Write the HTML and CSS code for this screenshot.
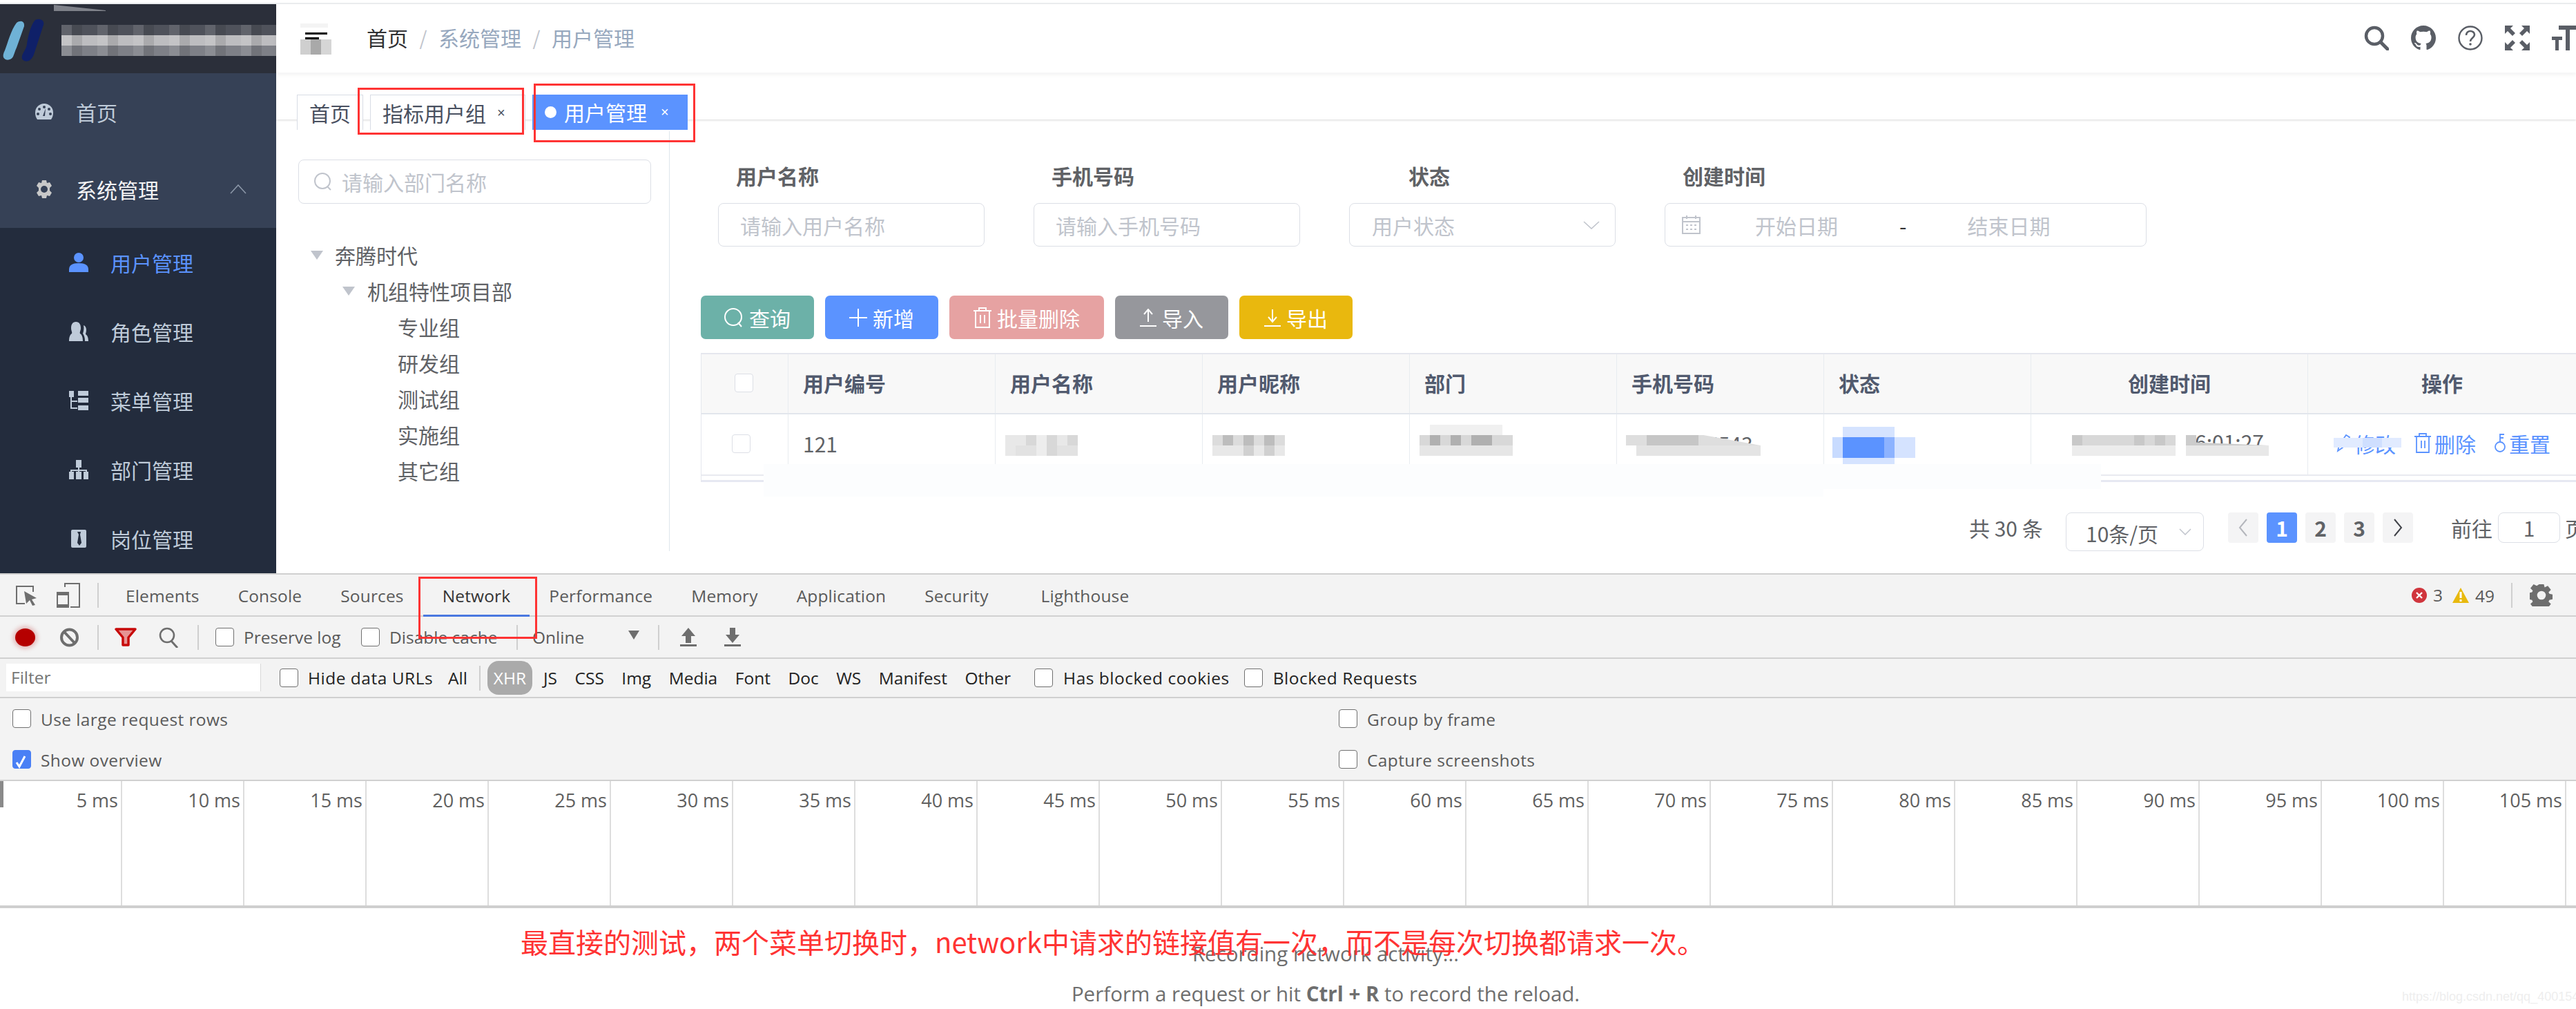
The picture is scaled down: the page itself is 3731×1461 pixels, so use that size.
FILE: index.html
```html
<!DOCTYPE html>
<html lang="zh-CN">
<head>
<meta charset="utf-8">
<title>用户管理</title>
<link rel="stylesheet" href="styles.css">
</head>
<body>
<div class="topline"></div>
<div class="app">
  <aside class="sidebar">
    <div class="logo">
      <svg class="logo-mark" width="66" height="66" viewBox="0 0 66 66"><path d="M20 6c5-4 12-3 11 5L20 42c-2 4-3 8-5 13-3 6-12 6-14 1-1-3 0-6 2-10 4-10 9-30 17-40z" fill="#6fb2d6"/><path d="M47 2c6-3 14 0 12 7L45 52c-2 6-8 12-14 9-4-2-4-5-2-10 3-6 5-8 6-14 1-6 4-26 12-35z" fill="#0f2068"/></svg>
      <div class="logo-mosaic"></div>
    </div>
    <nav class="menu">
      <div class="menu-item">
        <svg class="mi" viewBox="0 0 28 28"><path d="M14 2a13 13 0 0 0-13 13c0 4 1 7 3 10h20c2-3 3-6 3-10A13 13 0 0 0 14 2z" fill="#bfcbd9"/><g fill="#364156"><circle cx="14" cy="7" r="2"/><circle cx="7" cy="10" r="2"/><circle cx="21" cy="10" r="2"/><circle cx="5" cy="17" r="2"/><circle cx="23" cy="17" r="2"/><path d="M16 9l-1 11h-3z"/></g></svg>
        <span>首页</span>
      </div>
      <div class="menu-item is-open">
        <svg class="mi" viewBox="0 0 28 28"><path d="M11 1h6l1 4 4-1 3 5-3 3v4l3 3-3 5-4-1-1 4h-6l-1-4-4 1-3-5 3-3v-4L3 9l3-5 4 1z" fill="#c8c8c8"/><circle cx="14" cy="14" r="5" fill="#364156"/></svg>
        <span>系统管理</span>
        <svg class="caret" width="24" height="14" viewBox="0 0 24 14"><path d="M1 13L12 1l11 12" fill="none" stroke="#8c97a8" stroke-width="1.6"/></svg>
      </div>
      <div class="submenu">
        <div class="sub-item active">
          <svg class="mi" viewBox="0 0 28 28"><circle cx="14" cy="7" r="7" fill="#5b93ff"/><path d="M0 28v-4c0-6 5-9 14-9s14 3 14 9v4z" fill="#5b93ff"/></svg>
          <span>用户管理</span>
        </div>
        <div class="sub-item">
          <svg class="mi" viewBox="0 0 28 28"><path d="M10 0c5 0 7 4 7 9 0 4-2 6-1 8 3 2 4 6 4 11H0c0-5 1-9 4-11 1-2-1-4-1-8 0-5 2-9 7-9z" fill="#bfcbd9"/><path d="M21 5c3 1 4 4 4 7s-1 4-1 6c2 1 4 4 4 10h-5c0-5-1-8-3-11 1-3 2-8 1-12z" fill="#bfcbd9"/></svg>
          <span>角色管理</span>
        </div>
        <div class="sub-item">
          <svg class="mi" viewBox="0 0 28 28"><g fill="#bfcbd9"><rect width="7" height="9"/><rect x="13" width="15" height="7"/><rect x="13" y="10" width="15" height="7"/><rect x="13" y="21" width="15" height="7"/><path d="M2 9h2v5h8v2H4v8h8v2H2z"/></g></svg>
          <span>菜单管理</span>
        </div>
        <div class="sub-item">
          <svg class="mi" viewBox="0 0 28 28"><g fill="#bfcbd9"><rect x="10" width="8" height="11"/><rect y="17" width="7" height="11"/><rect x="10" y="17" width="8" height="11"/><rect x="21" y="17" width="7" height="11"/><path d="M13 11h2v3h11v3h-2v-1H15v1h-2v-1H4v1H2v-3h11z"/></g></svg>
          <span>部门管理</span>
        </div>
        <div class="sub-item">
          <svg class="mi" viewBox="0 0 28 28"><rect x="3" y="1" width="22" height="26" rx="2" fill="#bfcbd9"/><path d="M12 4h5l-1 4 2 12-3 4-3-4 2-12z" fill="#232c3d"/></svg>
          <span>岗位管理</span>
        </div>
      </div>
    </nav>
  </aside>

  <main class="content">
    <header class="navbar">
      <div class="hamburger"><i class="hb-bar"></i><i class="hb-bar hb-short"></i></div>
      <div class="crumbs">
        <span class="crumb-home">首页</span><span class="sep">/</span><span>系统管理</span><span class="sep">/</span><span>用户管理</span>
      </div>
      <div class="nav-icons">
        <svg width="36" height="36" viewBox="0 0 36 36"><circle cx="15" cy="15" r="12" fill="none" stroke="#5a5e66" stroke-width="4.5"/><path d="M24 24l10 10" stroke="#5a5e66" stroke-width="5" stroke-linecap="round"/></svg>
        <svg width="36" height="36" viewBox="0 0 16 16"><path fill="#5a5e66" d="M8 0C3.58 0 0 3.58 0 8c0 3.54 2.29 6.53 5.47 7.59.4.07.55-.17.55-.38 0-.19-.01-.82-.01-1.49-2.01.37-2.53-.49-2.69-.94-.09-.23-.48-.94-.82-1.13-.28-.15-.68-.52-.01-.53.63-.01 1.08.58 1.23.82.72 1.21 1.87.87 2.33.66.07-.52.28-.87.51-1.07-1.78-.2-3.64-.89-3.64-3.95 0-.87.31-1.59.82-2.15-.08-.2-.36-1.02.08-2.12 0 0 .67-.21 2.2.82.64-.18 1.32-.27 2-.27s1.36.09 2 .27c1.53-1.04 2.2-.82 2.2-.82.44 1.1.16 1.92.08 2.12.51.56.82 1.27.82 2.15 0 3.07-1.87 3.75-3.65 3.95.29.25.54.73.54 1.48 0 1.07-.01 1.93-.01 2.2 0 .21.15.46.55.38A8.01 8.01 0 0 0 16 8c0-4.42-3.58-8-8-8z"/></svg>
        <svg width="36" height="36" viewBox="0 0 36 36"><circle cx="18" cy="18" r="16.5" fill="none" stroke="#5a5e66" stroke-width="2.4"/><path d="M12 14c0-4 3-6 6-6s6 2 6 5c0 5-6 5-6 10" fill="none" stroke="#5a5e66" stroke-width="2.6"/><circle cx="18" cy="27" r="1.8" fill="#5a5e66"/></svg>
        <svg width="36" height="36" viewBox="0 0 36 36"><g fill="#5a5e66"><path d="M0 0h12L8 4l7 7-4 4-7-7-4 4z"/><path d="M36 0H24l4 4-7 7 4 4 7-7 4 4z"/><path d="M0 36H12L8 32l7-7-4-4-7 7-4-4z"/><path d="M36 36H24l4-4-7-7 4-4 7 7 4-4z"/></g></svg>
        <svg class="icon-size" width="36" height="36" viewBox="0 0 36 36"><g fill="#5a5e66"><path d="M10 0h26v6H26v30h-6V6H10z"/><path d="M0 16h15v5h-5v15H5V21H0z"/></g></svg>
      </div>
    </header>

    <div class="tags">
      <span class="tag">首页</span>
      <span class="tag">指标用户组<i class="x">×</i></span>
      <span class="tag tag-active"><i class="dot"></i>用户管理<i class="x">×</i></span>
    </div>

    <div class="page">
      <section class="tree-panel">
        <div class="field tree-search">
          <svg width="28" height="26" viewBox="0 0 28 26"><circle cx="13" cy="12" r="11" fill="none" stroke="#c0c4cc" stroke-width="2"/><path d="M20 20l5 5" stroke="#c0c4cc" stroke-width="2"/></svg>
          <span class="ph">请输入部门名称</span>
        </div>
        <ul class="tree">
          <li class="t1"><i class="tri"></i>奔腾时代</li>
          <li class="t2"><i class="tri"></i>机组特性项目部</li>
          <li class="t3">专业组</li>
          <li class="t3">研发组</li>
          <li class="t3">测试组</li>
          <li class="t3">实施组</li>
          <li class="t3">其它组</li>
        </ul>
      </section>

      <section class="list-panel">
        <form class="filters">
          <div class="fi">
            <label>用户名称</label>
            <div class="field"><span class="ph">请输入用户名称</span></div>
          </div>
          <div class="fi">
            <label>手机号码</label>
            <div class="field"><span class="ph">请输入手机号码</span></div>
          </div>
          <div class="fi fi-status">
            <label>状态</label>
            <div class="field field-select"><span class="ph">用户状态</span>
              <svg width="24" height="12" viewBox="0 0 24 12"><path d="M1 1l11 10L23 1" fill="none" stroke="#c0c4cc" stroke-width="1.6"/></svg>
            </div>
          </div>
          <div class="fi fi-date">
            <label>创建时间</label>
            <div class="field field-date">
              <svg width="27" height="27" viewBox="0 0 27 27"><g fill="none" stroke="#c0c4cc" stroke-width="2"><rect x="1" y="3" width="25" height="23"/><path d="M1 9h25M7 0v5M20 0v5"/></g><g fill="#c0c4cc"><rect x="6" y="13" width="3" height="2"/><rect x="12" y="13" width="3" height="2"/><rect x="18" y="13" width="3" height="2"/><rect x="6" y="19" width="3" height="2"/><rect x="12" y="19" width="3" height="2"/><rect x="18" y="19" width="3" height="2"/></g></svg>
              <span class="ph date-start">开始日期</span>
              <span class="date-sep">-</span>
              <span class="ph date-end">结束日期</span>
            </div>
          </div>
        </form>

        <div class="actions">
          <button type="button" class="btn b-green"><svg width="28" height="28" viewBox="0 0 28 28"><circle cx="13" cy="13" r="12" fill="none" stroke="#fff" stroke-width="2"/><path d="M20 21l5 6" stroke="#fff" stroke-width="2"/></svg>查询</button>
          <button type="button" class="btn b-blue"><svg width="26" height="26" viewBox="0 0 26 26"><path d="M13 0v26M0 13h26" stroke="#fff" stroke-width="2"/></svg>新增</button>
          <button type="button" class="btn b-red"><svg width="26" height="30" viewBox="0 0 26 30"><g fill="none" stroke="#fff" stroke-width="2"><path d="M0 5h26M8 5V1h10v4M3 5v24h20V5M10 11v12M16 11v12"/></g></svg>批量删除</button>
          <button type="button" class="btn b-grey"><svg width="24" height="26" viewBox="0 0 24 26"><path d="M12 19V1M6 8l6-7 6 7M0 25h24" fill="none" stroke="#fff" stroke-width="2"/></svg>导入</button>
          <button type="button" class="btn b-yellow"><svg width="24" height="26" viewBox="0 0 24 26"><path d="M12 1v18M6 12l6 7 6-7M0 25h24" fill="none" stroke="#fff" stroke-width="2"/></svg>导出</button>
        </div>

        <div class="table">
          <div class="row head">
            <div class="c"><i class="cb"></i></div>
            <div class="c">用户编号</div>
            <div class="c">用户名称</div>
            <div class="c">用户昵称</div>
            <div class="c">部门</div>
            <div class="c">手机号码</div>
            <div class="c">状态</div>
            <div class="c center">创建时间</div>
            <div class="c center">操作</div>
          </div>
          <div class="row body">
            <div class="c"><i class="cb cb-body"></i></div>
            <div class="c">121</div>
            <div class="c">
              <svg class="mz mz-name" width="105" height="30" viewBox="0 0 7 2" shape-rendering="crispEdges"><path fill="#e8e8e8" d="M0 0h7v2H0z"/><path fill="#d8d8d8" d="M2 0h1v1H2zM4 0h1v2H4zM6 0h1v1H6z"/><path fill="#e2e2e2" d="M1 1h2v1H1zM5 1h2v1H5z"/><path fill="#ededed" d="M3 0h1v2H3z"/></svg>
            </div>
            <div class="c">
              <svg class="mz mz-name" width="105" height="30" viewBox="0 0 7 2" shape-rendering="crispEdges"><path fill="#dcdcdc" d="M0 0h7v1H0z"/><path fill="#bdbdbd" d="M1 0h1v1H1zM3 0h1v1H3zM5 0h1v1H5z"/><path fill="#e8e8e8" d="M0 1h7v1H0z"/><path fill="#d0d0d0" d="M3 1h1v1H3zM5 1h1v1H5z"/></svg>
            </div>
            <div class="c">
              <svg class="mz mz-dept" width="135" height="45" viewBox="0 0 9 3" shape-rendering="crispEdges"><path fill="#f0f0f0" d="M1 0h7v1H1z"/><path fill="#d8d8d8" d="M0 1h9v1H0z"/><path fill="#b0b0b0" d="M1 1h1v1H1zM3 1h1v1H3zM5 1h2v1H5z"/><path fill="#e6e6e6" d="M0 2h9v1H0z"/></svg>
            </div>
            <div class="c cell-clip">5543
              <svg class="mz mz-phone" width="195" height="30" viewBox="0 0 13 2"><path fill="#dedede" d="M0 0h7.5l5.5 1H0z"/><path fill="#c6c6c6" d="M2 0h5v1H2z"/><path fill="#e4e4e4" d="M1 1h12v1H1z"/></svg>
            </div>
            <div class="c">
              <svg class="mz mz-status" width="120" height="60" viewBox="0 0 8 4" shape-rendering="crispEdges"><path fill="#d5e3ff" d="M1 0h5v1H1zM1 3h5v1H1z"/><path fill="#c8dbff" d="M0 1h1v2H0z"/><path fill="#5b93ff" d="M1 1h4v2H1z"/><path fill="#8db3ff" d="M5 1h1v2H5z"/><path fill="#d5e3ff" d="M6 1h2v2H6z"/></svg>
            </div>
            <div class="c cell-time">
              <span class="time-text">6:01:27</span>
              <svg class="mz mz-time" width="285" height="30" viewBox="0 0 19 2"><path fill="#d8d8d8" d="M0 0h10v1H0z"/><path fill="#c8c8c8" d="M0 0h1v1H0zM6 0h1v1H6zM8 0h1v1H8z"/><path fill="#ececec" d="M0 1h10v1H0z"/><path fill="#cccccc" d="M11 0h1v.7l7 .3v1h-8z"/><path fill="#e8e8e8" d="M11 1h8v1h-8z"/></svg>
            </div>
            <div class="c ops">
              <span class="op">
                <svg width="22" height="30" viewBox="0 0 22 30"><path d="M3 26l2-9L15 3l5 3L10 21z" fill="none" stroke="#5b93ff" stroke-width="1.8"/></svg>修改
                <svg class="mz mz-op" width="105" height="14" viewBox="0 0 7 1" shape-rendering="crispEdges"><path fill="#e1ebff" d="M0 0h7v1H0z"/><path fill="#cfdfff" d="M3 0h2v1H3z"/></svg>
              </span>
              <span class="op"><svg width="24" height="30" viewBox="0 0 24 30"><path d="M0 5h24M7 5V1h10v4M3 5v23h18V5M10 11v11M15 11v11" fill="none" stroke="#5b93ff" stroke-width="1.8"/></svg>删除</span>
              <span class="op"><svg width="16" height="30" viewBox="0 0 16 30"><circle cx="8" cy="20" r="7" fill="none" stroke="#5b93ff" stroke-width="1.8"/><path d="M8 13V2h6M8 7h5" fill="none" stroke="#5b93ff" stroke-width="1.8"/></svg>重置</span>
            </div>
          </div>
          <div class="row tail"></div>
          <div class="smear smear-a"></div>
          <div class="smear smear-b"></div>
        </div>

        <div class="pager">
          <span class="total">共 30 条</span>
          <div class="field size"><span>10条/页</span><svg width="18" height="10" viewBox="0 0 18 10"><path d="M1 1l8 8 8-8" fill="none" stroke="#c0c4cc" stroke-width="1.5"/></svg></div>
          <span class="pg pg-nav"><svg width="14" height="26" viewBox="0 0 14 26"><path d="M12 1L2 13l10 12" fill="none" stroke="#b4b6bc" stroke-width="2"/></svg></span>
          <span class="pg pg-on">1</span>
          <span class="pg">2</span>
          <span class="pg">3</span>
          <span class="pg pg-nav"><svg width="14" height="26" viewBox="0 0 14 26"><path d="M2 1l10 12L2 25" fill="none" stroke="#404248" stroke-width="2"/></svg></span>
          <span class="goto">前往</span>
          <span class="field goto-in">1</span>
          <span class="goto-end">页</span>
        </div>
      </section>
    </div>
  </main>
</div>

<section class="devtools">
  <div class="dt-bar dt-tabs">
    <svg class="dt-i1" width="32" height="30" viewBox="0 0 32 30"><path d="M14 27H2V2h24v8" fill="none" stroke="#6e6e6e" stroke-width="2"/><path d="M13 9l18 10-7 2 5 8-4 1-4-8-5 5z" fill="#6e6e6e"/></svg>
    <svg class="dt-i2" width="34" height="36" viewBox="0 0 34 36"><path d="M12 6V1h21v34H20" fill="none" stroke="#6e6e6e" stroke-width="2"/><rect x="1" y="14" width="16" height="21" fill="none" stroke="#6e6e6e" stroke-width="2"/><rect x="1" y="14" width="16" height="4" fill="#6e6e6e"/><rect x="1" y="31" width="16" height="4" fill="#6e6e6e"/></svg>
    <i class="dt-sep dt-sep-a"></i>
    <nav class="dt-nav">
      <span>Elements</span><span>Console</span><span>Sources</span><span class="on">Network</span><span>Performance</span><span>Memory</span><span>Application</span><span>Security</span><span class="last">Lighthouse</span>
    </nav>
    <div class="dt-status">
      <svg width="22" height="22" viewBox="0 0 22 22"><circle cx="11" cy="11" r="11" fill="#d0353d"/><path d="M7 7l8 8M15 7l-8 8" stroke="#fff" stroke-width="2.4"/></svg>
      <span class="n1">3</span>
      <svg width="24" height="22" viewBox="0 0 24 22"><path d="M12 0l12 22H0z" fill="#e8b90e"/><rect x="10.5" y="6" width="3" height="9" fill="#fff"/><rect x="10.5" y="17" width="3" height="3" fill="#fff"/></svg>
      <span class="n2">49</span>
      <i class="dt-sep dt-sep-b"></i>
      <svg class="gear" width="34" height="32" viewBox="0 0 28 28"><path fill="#6e6e6e" d="M11 0h6l1 4 4-2 4 5-3 3 1 2 4 1v6l-4 1-1 2 3 3-4 5-4-2-1 0-1 4h-6l-1-4-1 0-4 2-4-5 3-3-1-2-4-1V11l4-1 1-2-3-3 4-5 4 2z"/><circle cx="14" cy="14" r="5.5" fill="#f3f3f3"/></svg>
    </div>
  </div>
  <div class="dt-bar dt-tools">
    <i class="rec"></i>
    <svg class="ti-block" width="29" height="28" viewBox="0 0 29 28"><circle cx="14.5" cy="14" r="11.5" fill="none" stroke="#6e6e6e" stroke-width="4"/><path d="M7 6l15 16" stroke="#6e6e6e" stroke-width="4"/></svg>
    <i class="dt-sep sep-t1"></i>
    <svg class="ti-filter" width="32" height="27" viewBox="0 0 32 27"><path d="M2 2h28L20 14v11h-8V14z" fill="#e69494" stroke="#c70a0a" stroke-width="3.5" stroke-linejoin="round"/></svg>
    <svg class="ti-search" width="30" height="30" viewBox="0 0 30 30"><circle cx="12" cy="12" r="10" fill="none" stroke="#6e6e6e" stroke-width="2.6"/><path d="M18 20l9 10" stroke="#6e6e6e" stroke-width="3"/></svg>
    <i class="dt-sep sep-t2"></i>
    <i class="cb2 t-c1"></i><span class="t-l1">Preserve log</span>
    <i class="cb2 t-c2"></i><span class="t-l2">Disable cache</span>
    <i class="dt-sep sep-t3"></i>
    <span class="t-online">Online</span>
    <i class="tri-dt"></i>
    <i class="dt-sep sep-t4"></i>
    <svg class="ti-up" width="24" height="27" viewBox="0 0 24 27"><path d="M12 0l10 12h-6v10H8V12H2zM0 24h24v3H0z" fill="#6e6e6e"/></svg>
    <svg class="ti-down" width="24" height="27" viewBox="0 0 24 27"><path d="M8 0h8v10h6L12 22 2 10h6zM0 24h24v3H0z" fill="#6e6e6e"/></svg>
  </div>
  <div class="dt-bar dt-filter">
    <div class="filter-in">Filter</div>
    <i class="cb2 f-c1"></i><span class="f-l1">Hide data URLs</span>
    <span class="f-all">All</span>
    <i class="dt-sep sep-f"></i>
    <span class="pill">XHR</span>
    <span class="ty ty1">JS</span><span class="ty">CSS</span><span class="ty">Img</span><span class="ty">Media</span><span class="ty">Font</span><span class="ty">Doc</span><span class="ty">WS</span><span class="ty">Manifest</span><span class="ty">Other</span>
    <i class="cb2 f-c2"></i><span class="f-l2">Has blocked cookies</span>
    <i class="cb2 f-c3"></i><span class="f-l3">Blocked Requests</span>
  </div>
  <div class="dt-settings">
    <div class="set-col">
      <div class="set-row"><i class="cb2"></i><span>Use large request rows</span></div>
      <div class="set-row"><i class="cb2 cb-on"><svg width="19" height="20" viewBox="0 0 19 20"><path d="M3 11l4 6L15 2" fill="none" stroke="#fff" stroke-width="3"/></svg></i><span>Show overview</span></div>
    </div>
    <div class="set-col set-right">
      <div class="set-row"><i class="cb2"></i><span>Group by frame</span></div>
      <div class="set-row"><i class="cb2"></i><span>Capture screenshots</span></div>
    </div>
  </div>
  <div class="timeline">
    <i class="tl-start"></i>
    <span>5 ms</span><span>10 ms</span><span>15 ms</span><span>20 ms</span><span>25 ms</span><span>30 ms</span><span>35 ms</span><span>40 ms</span><span>45 ms</span><span>50 ms</span><span>55 ms</span><span>60 ms</span><span>65 ms</span><span>70 ms</span><span>75 ms</span><span>80 ms</span><span>85 ms</span><span>90 ms</span><span>95 ms</span><span>100 ms</span><span>105 ms</span>
  </div>
  <div class="empty">
    <p class="e1">Recording network activity...</p>
    <p class="e2">Perform a request or hit <b>Ctrl + R</b> to record the reload.</p>
  </div>
</section>

<div class="mark mark-tag1"></div>
<div class="mark mark-tag2"></div>
<div class="mark mark-net"></div>
<div class="note">最直接的测试，两个菜单切换时，network中请求的链接值有一次，而不是每次切换都请求一次。</div>
<div class="wm">https://blog.csdn.net/qq_40015409</div>
</body>
</html>
```

FILE: styles.css
```css
* { box-sizing: border-box; }
html, body { margin: 0; padding: 0; }
body {
  width: 3731px; height: 1461px; overflow: hidden; position: relative; background: #fff;
  font-family: "Noto Sans CJK SC", "Noto Sans", sans-serif; font-size: 30px; color: #606266;
}
i { font-style: normal; display: block; }
.topline { height: 6px; border-bottom: 2px solid #eceef0; }

.app { display: flex; height: 826px; border-bottom: 2px solid #d0d0d0; }

/* sidebar */
.sidebar { width: 400px; flex: none; background: #232c3d; }
.logo { height: 100px; background: #2b2f3a; display: flex; align-items: flex-start; padding: 21px 0 0 4px; position: relative; }
.logo::before { content: ""; position: absolute; left: 78px; top: 1px; width: 75px; height: 9px; background: #7f828a; clip-path: polygon(0 0, 100% 90%, 100% 100%, 0 100%); }
.logo-mark { flex: none; }
.logo-mosaic {
  width: 316px; height: 45px; margin: 9px 0 0 19px;
  background:
    repeating-linear-gradient(90deg, rgba(255,255,255,.10) 0 15px, rgba(0,0,0,.10) 15px 30px, transparent 30px 52px),
    linear-gradient(180deg, #4f525b 0 15px, #bdbdc0 15px 30px, #7e8087 30px 45px);
}
.menu-item { height: 112px; background: #364156; display: flex; align-items: center; padding-left: 50px; color: #bfcbd9; line-height: 1; position: relative; }
.menu-item.is-open { color: #f4f4f5; }
.mi { width: 28px; height: 28px; flex: none; margin-right: 32px; }
.caret { position: absolute; left: 333px; top: 49px; }
.sub-item { height: 100px; display: flex; align-items: center; padding-left: 100px; color: #bfcbd9; }
.sub-item.active { color: #5b93ff; }

/* content */
.content { flex: 1; min-width: 0; }
.navbar { height: 100px; display: flex; align-items: center; position: relative; padding-left: 35px; box-shadow: 0 2px 6px rgba(0,21,41,.06); }
.hamburger {
  width: 45px; height: 45px; flex: none;
  background:
    linear-gradient(#f4f4f4,#f4f4f4) 0 0/40px 6px no-repeat,
    linear-gradient(90deg,#cfcfcf 0 15px,#a9a9a9 15px 30px,#d6d6d6 30px 45px) 0 23px/45px 22px no-repeat;
  position: relative; padding: 13px 0 0 7px;
}
.hb-bar { width: 32px; height: 3px; background: #000; margin-bottom: 4px; }
.hb-short { width: 20px; }
.crumbs { display: flex; margin-left: 51px; color: #97a8be; line-height: 40px; margin-top: -4px; }
.crumb-home { color: #303133; }
.sep { width: 44px; text-align: center; color: #c0c4cc; font-size: 28px; }
.nav-icons { position: absolute; left: 3024px; top: 31px; display: flex; gap: 32px; width: 320px; }
.nav-icons svg { flex: none; }
.tags { height: 67px; position: relative; display: flex; padding: 31px 0 0 30px; box-shadow: 0 1px 3px rgba(0,0,0,.16); }
.tag { height: 51px; flex: none; border: 1px solid #d8dce5; border-bottom: 0; padding: 0 17px; line-height: 50px; margin-right: 10px; color: #495060; display: flex; background: #fff; white-space: nowrap; }
.tag:nth-child(1) { width: 96px; }
.tag:nth-child(2) { width: 225px; }
.tag-active { width: 225px; background: #5b93ff; border: 0; color: #fff; padding-left: 18px; }
.x { font-size: 20px; margin-left: 16px; color: inherit; font-family: "Liberation Sans", sans-serif; }
.tag-active .x { margin-left: 20px; }
.dot { width: 17px; height: 17px; border-radius: 50%; background: #fff; margin: 17px 11px 0 0; }

.page { display: flex; }
.tree-panel { width: 570px; flex: none; height: 608px; margin-top: 17px; border-right: 1px solid #dfe6ec; padding: 41px 26px 0 32px; }
.field { border: 1.5px solid #dcdfe6; border-radius: 8px; height: 63px; display: flex; align-items: center; padding-left: 31px; background: #fff; }
.ph { color: #c0c4cc; white-space: nowrap; }
.tree-search { height: 64px; width: 511px; padding-left: 21px; gap: 13px; }
.tree { list-style: none; margin: 48px 0 0; padding: 0; color: #606266; }
.tree li { height: 52px; line-height: 52px; display: flex; align-items: center; }
.t1 { padding-left: 18px; }
.t2 { padding-left: 64px; }
.t3 { padding-left: 144px; }
.tri { width: 0; height: 0; border: 9px solid transparent; border-top: 13px solid #c0c4cc; border-bottom: 0; margin-right: 17px; }
.t2 .tri { margin-right: 18px; }

.list-panel { flex: 1; min-width: 0; padding: 65px 0 0 45px; position: relative; }
.filters { display: flex; margin: 0 0 0 25px; }
.fi { width: 386px; margin-right: 71px; flex: none; }
.fi-date { width: 698px; margin: 0; }
.fi label { display: block; height: 36px; line-height: 33px; margin: 0 0 20px 26px; font-weight: 700; color: #606266; white-space: nowrap; }
.fi-status label { margin-left: 86px; }
.field-select { justify-content: space-between; padding: 0 22px 0 32px; }
.field-date { padding-left: 24px; margin-top: 1px; }
.date-start { margin-left: 79px; }
.date-sep { margin-left: 89px; color: #303133; }
.date-end { margin-left: 88px; }

.actions { display: flex; gap: 16px; margin-top: 71px; }
.btn { height: 63px; width: 164px; border: 0; border-radius: 7px; color: #fff; font: inherit; display: flex; align-items: center; justify-content: center; gap: 8px; padding: 0; }
.b-green { background: #6cb1a8; }
.b-blue { background: #5b93ff; }
.b-red { background: #e6a2a2; width: 224px; }
.b-grey { background: #96979c; }
.b-yellow { background: #e9b80e; }

.table { margin-top: 20px; position: relative; border-top: 2px solid #e5e7ee; border-left: 1px solid #e5e7ee; width: 2717px; }
.row { display: grid; grid-template-columns: 126px 300px 300px 300px 300px 300px 300px 401px 389px; }
.head { height: 87px; background: #f8f8f8; border-bottom: 2px solid #e2e6ec; font-weight: 700; color: #515a6e; }
.body { height: 89px; border-bottom: 2px solid #e8eaf0; }
.tail { height: 9px; border-bottom: 3px solid #e6e8f2; }
.c { border-right: 1px solid #e8ecf0; display: flex; align-items: center; padding: 0 0 3px 21px; position: relative; white-space: nowrap; }
.c:first-child { padding-left: 48px; }
.c.center { justify-content: center; padding-left: 0; }
.cb { width: 27px; height: 27px; border: 1.5px solid #dcdfe6; border-radius: 4px; background: #fff; }
.cb-body { margin: 0 0 0 -4px; }
.mz { position: absolute; display: block; }
.mz-name { left: 14px; top: 30px; }
.mz-dept { left: 14px; top: 15px; }
.mz-phone { left: 13px; top: 30px; }
.mz-status { left: 12px; top: 18px; }
.mz-time { left: 59px; top: 30px; }
.mz-op { left: -7px; top: 14px; }
.cell-clip { padding-left: 130px; color: #606266; }
.cell-time { padding-left: 237px; }
.time-text { margin-top: -6px; }
.ops { color: #5b93ff; padding-left: 40px; gap: 27px; }
.op { display: flex; align-items: center; gap: 5px; position: relative; }
.smear { position: absolute; background: #fcfdfe; }
.smear-a { left: 90px; top: 159px; width: 1535px; height: 47px; }
.smear-b { left: 1625px; top: 159px; width: 402px; height: 36px; }

.pager { display: flex; align-items: flex-start; margin: 44px 0 0 1837px; white-space: nowrap; line-height: 44px; }
.pager > * { flex: none; }
.total { width: 140px; }
.size { width: 200px; height: 56px; padding: 0 17px 0 28px; margin-right: 35px; justify-content: space-between; color: #606266; line-height: 1; }
.size span { margin-top: 4px; }
.pg { width: 44px; height: 44px; border-radius: 4px; background: #f4f4f5; margin-right: 12px; display: flex; align-items: center; justify-content: center; font-weight: 700; color: #606266; }
.pg-on { background: #5b93ff; color: #fff; }
.goto { margin-left: 43px; width: 68px; }
.goto-in { width: 90px; height: 44px; justify-content: center; padding: 0; }
.goto-end { margin-left: 7px; }

/* devtools */
.devtools { font-family: "Open Sans", "Noto Sans", sans-serif; font-size: 24.5px; color: #5a5a5a; height: 627px; }
.dt-bar { display: flex; align-items: center; white-space: nowrap; border-bottom: 2px solid #d0d0d0; position: relative; background: #f3f3f3; }
.dt-tabs { height: 61px; }
.dt-i1 { margin-left: 22px; flex: none; }
.dt-i2 { margin-left: 28px; flex: none; }
.dt-sep { width: 2px; height: 36px; background: #cfcfcf; flex: none; }
.dt-sep-a { margin-left: 25px; }
.dt-nav { display: flex; margin-left: 11px; height: 59px; letter-spacing: .15px; }
.dt-nav span { padding: 0 28px; height: 59px; line-height: 61px; position: relative; }
.dt-nav .on { color: #333; }
.dt-nav .on::after { content: ""; position: absolute; left: 0; right: 0; bottom: -3px; height: 4px; background: #4a78e0; }
.dt-nav .last { margin-left: 20px; }
.dt-status { position: absolute; left: 3493px; top: 12px; display: flex; align-items: center; height: 36px; }
.n1 { margin-left: 9px; line-height: 36px; }
.dt-status svg + .n1 + svg { margin-left: 14px; }
.n2 { margin-left: 9px; }
.dt-sep-b { margin-left: 24px; }
.gear { margin-left: 25px; }
.dt-tools { height: 61px; padding-left: 22px; }
.rec { width: 29px; height: 26px; border-radius: 50%; background: #b50000; box-shadow: 0 0 6px 3px rgba(181,0,0,.25); flex: none; }
.ti-block { margin-left: 35px; flex: none; }
.sep-t1 { margin-left: 26px; }
.ti-filter { margin-left: 23px; flex: none; }
.ti-search { margin-left: 32px; flex: none; }
.sep-t2 { margin-left: 26px; }
.cb2 { width: 27px; height: 27px; border: 1.5px solid #707070; border-radius: 4px; background: #fff; flex: none; }
.t-c1 { margin-left: 24px; }
.t-l1 { margin-left: 14px; width: 170px; }
.t-l2 { margin-left: 14px; width: 170px; }
.sep-t3 { margin-left: 14px; margin-right: 21px; }
.t-online { width: 139px; }
.tri-dt { width: 0; height: 0; border: 8px solid transparent; border-top: 13px solid #6e6e6e; border-bottom: 0; margin-bottom: 6px; }
.sep-t4 { margin-left: 27px; }
.ti-up { margin-left: 30px; flex: none; }
.ti-down { margin-left: 40px; flex: none; }
.dt-filter { height: 57px; padding-left: 9px; color: #222; }
.filter-in { width: 369px; height: 40px; background: #fff; border-right: 1px solid #d8d8d8; color: #757575; line-height: 40px; padding-left: 7px; margin-top: -2px; flex: none; }
.f-c1 { margin-left: 27px; }
.f-l1 { margin-left: 14px; width: 203px; letter-spacing: .5px; }
.f-all { width: 45px; }
.sep-f { height: 36px; margin-right: 10px; }
.pill { background: #aaa; color: #fff; width: 65px; height: 49px; line-height: 49px; text-align: center; border-radius: 16px; flex: none; }
.ty { margin-left: 25.5px; }
.ty1 { margin-left: 16px; }
.f-c2 { margin-left: 34px; }
.f-l2 { margin-left: 15px; letter-spacing: .5px; }
.f-c3 { margin-left: 21px; }
.f-l3 { margin-left: 15px; letter-spacing: .5px; }
.dt-settings { height: 120px; display: flex; padding-left: 18px; border-bottom: 2px solid #d0d0d0; background: #f3f3f3; }
.set-col { width: 1921px; flex: none; padding-top: 16px; }
.set-row { height: 59px; display: flex; align-items: flex-start; gap: 14px; line-height: 30px; letter-spacing: .4px; }
.cb-on { background: #4a80f5; border-color: #4a80f5; padding: 2px 0 0 2px; }
.timeline { height: 184px; background: #fff; display: flex; position: relative; border-bottom: 4px solid #cfcfcf; color: #5f5f5f; font-size: 27px; }
.timeline span { width: 177px; flex: none; text-align: right; padding: 9px 4px 0 0; border-right: 2px solid #ddd; }
.tl-start { position: absolute; left: 0; top: 0; width: 5px; height: 38px; background: #8a8a8a; }
.empty { text-align: center; color: #6e6e6e; font-size: 29.5px; padding-left: 109px; background: #fff; }
.empty p { margin: 0; }
.e1 { padding-top: 46px; line-height: 40px; height: 104px; }
.e2 { line-height: 40px; }

/* annotation overlays */
.mark { position: absolute; border: 3px solid #f33; }
.mark-tag1 { left: 518px; top: 127px; width: 241px; height: 68px; }
.mark-tag2 { left: 773px; top: 121px; width: 234px; height: 85px; }
.mark-net { left: 606px; top: 835px; width: 172px; height: 90px; }
.note { position: absolute; left: 754px; top: 1338px; color: #f33; font-family: "Noto Sans CJK SC", sans-serif; font-size: 40px; line-height: 50px; white-space: nowrap; }
.wm { position: absolute; left: 3479px; top: 1432px; font: 18px/22px "Liberation Sans", sans-serif; color: #eeeeee; white-space: nowrap; }
```
